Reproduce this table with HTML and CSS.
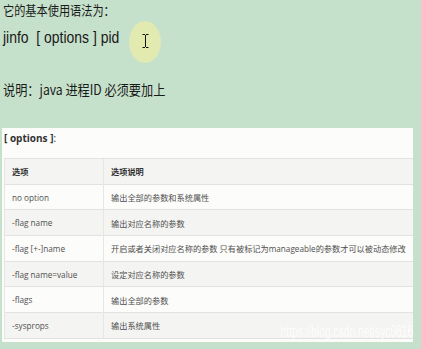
FILE: index.html
```html
<!DOCTYPE html>
<html>
<head>
<meta charset="utf-8">
<link rel="stylesheet" href="styles.css">
</head>
<body>
<div class="page">
  <p class="l1"><span class="squeeze">它的基本使用语法为：</span></p>
  <p class="l2"><span class="squeeze">jinfo&nbsp; [ options ] pid</span><span class="cursor"><svg class="ibeam" width="7" height="14" viewBox="0 0 7 14"><path d="M0.5 0.5h2.5M4 0.5h2.5M3.5 1v12M0.5 13.5h2.5M4 13.5h2.5" stroke="#111" stroke-width="1" fill="none"/></svg></span></p>
  <p class="l3"><span class="squeeze">说明：java 进程ID 必须要加上</span></p>
  <div class="panel">
    <p class="opt"><b>[ options ]</b>:</p>
    <table class="tbl">
      <thead>
        <tr><th class="c1">选项</th><th>选项说明</th></tr>
      </thead>
      <tbody>
        <tr><td class="c1">no option</td><td>输出全部的参数和系统属性</td></tr>
        <tr class="alt"><td class="c1">-flag name</td><td>输出对应名称的参数</td></tr>
        <tr><td class="c1">-flag [+-]name</td><td>开启或者关闭对应名称的参数 只有被标记为manageable的参数才可以被动态修改</td></tr>
        <tr class="alt"><td class="c1">-flag name=value</td><td>设定对应名称的参数</td></tr>
        <tr><td class="c1">-flags</td><td>输出全部的参数</td></tr>
        <tr class="alt"><td class="c1">-sysprops</td><td>输出系统属性</td></tr>
      </tbody>
    </table>
    <span class="wm">https://blog.csdn.net/syc0616</span>
  </div>
</div>
</body>
</html>
```
FILE: styles.css
```css
html, body {
  margin: 0;
  padding: 0;
  background: #c6e1cb;
}
.page {
  width: 421px;
  height: 349px;
  overflow: hidden;
  font-family: "Noto Sans CJK SC", "DejaVu Sans", sans-serif;
  color: #1a1a1a;
}
p { margin: 0; white-space: nowrap; }
.squeeze {
  display: inline-block;
  transform-origin: left center;
}
.l1 {
  font-family: "Noto Sans CJK SC", serif;
  font-size: 13px;
  line-height: 16px;
  padding: 2px 0 0 3px;
  height: 19px;
  box-sizing: border-box;
}
.l1 .squeeze { transform: scaleX(0.86); }
.l2 {
  position: relative;
  font-family: "Liberation Sans", "DejaVu Sans", sans-serif;
  font-size: 17px;
  line-height: 22px;
  padding: 8px 0 0 3px;
  height: 60px;
  box-sizing: border-box;
}
.l2 .squeeze { transform: scaleX(0.82); }
.cursor {
  position: absolute;
  left: 129px;
  top: 2px;
  width: 32px;
  height: 42px;
  border-radius: 50%;
  background: radial-gradient(ellipse at center, #e4ebae 0%, #e1eab1 65%, #d2e4bd 100%);
  display: flex;
  align-items: center;
  justify-content: center;
}
.ibeam {
  display: block;
  margin: -2px 0 0 0;
}
.l3 {
  font-family: "Noto Sans CJK SC", sans-serif;
  font-size: 14px;
  line-height: 20px;
  padding: 0 0 0 3px;
  height: 49px;
  box-sizing: border-box;
}
.l3 .squeeze { transform: scaleX(0.87); }
.panel {
  position: relative;
  margin-left: 2px;
  width: 411px;
  height: 214px;
  background: #fcfcfa;
  padding: 3px 0 0 2px;
  box-sizing: border-box;
}
.opt {
  font-family: "Open Sans", "Noto Sans CJK SC", sans-serif;
  font-size: 10px;
  line-height: 14px;
  color: #333;
  height: 27px;
}
.opt b { font-weight: 700; }
.tbl {
  border-collapse: collapse;
  width: 409px;
  font-family: "Open Sans", "Noto Sans CJK SC", sans-serif;
  font-size: 8.2px;
  color: #505050;
}
.tbl th, .tbl td {
  height: 24.7px;
  padding: 0 0 0 7px;
  text-align: left;
  border-top: 1px solid #e2e2e0;
  border-left: 1px solid #e6e6e4;
  white-space: nowrap;
}
.tbl th {
  font-weight: 700;
  color: #333;
  background: #f4f4f2;
}
.tbl .c1 { width: 91px; }
.tbl tr.alt td { background: #f4f4f2; }
.tbl tbody tr:last-child td { border-bottom: 1px solid #e2e2e0; }
.wm {
  position: absolute;
  right: 0;
  bottom: 1px;
  font-family: "Liberation Sans", sans-serif;
  font-size: 16px;
  color: rgba(255,255,255,0.85);
  transform: scaleX(0.64);
  transform-origin: right bottom;
}
```
